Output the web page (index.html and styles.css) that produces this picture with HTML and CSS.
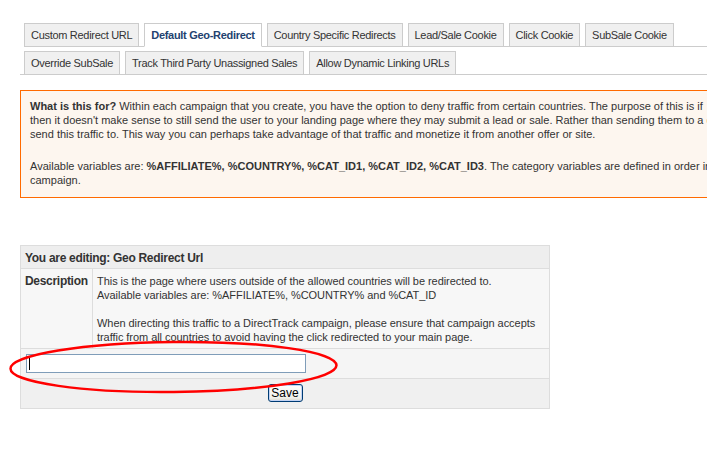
FILE: index.html
```html
<!DOCTYPE html>
<html>
<head>
<title>Default Geo-Redirect</title>
<link rel="stylesheet" href="styles.css">
</head>
<body>
<div class="page">

	<ul class="tabs first_row">
		<li><a href="#">Custom Redirect URL</a></li>
		<li class="active"><a href="#">Default Geo-Redirect</a></li>
		<li><a href="#">Country Specific Redirects</a></li>
		<li><a href="#">Lead/Sale Cookie</a></li>
		<li><a href="#">Click Cookie</a></li>
		<li><a href="#">SubSale Cookie</a></li>
	</ul>
	<ul class="tabs second_row">
		<li><a href="#">Override SubSale</a></li>
		<li><a href="#">Track Third Party Unassigned Sales</a></li>
		<li><a href="#">Allow Dynamic Linking URLs</a></li>
	</ul>

	<div class="notice">
		<p><b>What is this for?</b> Within each campaign that you create, you have the option to deny traffic from certain countries. The purpose of this is if<br>
		then it doesn't make sense to still send the user to your landing page where they may submit a lead or sale. Rather than sending them to a de<br>
		send this traffic to. This way you can perhaps take advantage of that traffic and monetize it from another offer or site.</p>
		<p>Available variables are: <b>%AFFILIATE%, %COUNTRY%, %CAT_ID1, %CAT_ID2, %CAT_ID3</b>. The category variables are defined in order in v<br>
		campaign.</p>
	</div>

	<div class="edit_box">
		<table class="edit_table">
			<tr>
				<th colspan="2" class="heading">You are editing: Geo Redirect Url</th>
			</tr>
			<tr>
				<td class="label">Description</td>
				<td class="info">
					This is the page where users outside of the allowed countries will be redirected to.<br>
					Available variables are: %AFFILIATE%, %COUNTRY% and %CAT_ID<br>
					<br>
					When directing this traffic to a DirectTrack campaign, please ensure that campaign accepts<br>
					traffic from all countries to avoid having the click redirected to your main page.
				</td>
			</tr>
			<tr>
				<td colspan="2" class="field">
					<span class="caret_wrap"><input type="text" class="txturl" name="geo_url"></span>
				</td>
			</tr>
			<tr>
				<td colspan="2" class="buttons">
					<button type="button" class="save">Save</button>
				</td>
			</tr>
		</table>

		<!-- red marker drawn round the url field -->
		<svg class="marker" width="350" height="70" viewBox="0 0 350 70">
			<ellipse cx="173.5" cy="35" rx="163" ry="25" fill="none" stroke="#f00" stroke-width="2.5" transform="rotate(-0.6 173.5 35)"/>
		</svg>
	</div>

</div>
</body>
</html>
```

FILE: styles.css
```css
html {
overflow: hidden;
}

body {
margin: 0;
background: #fff;
color: #333;
font-family: "Liberation Sans", Arial, sans-serif;
font-size: 11px;
}

.page {
padding: 23px 0 0 20px;
}

/* tabs */

.tabs {
display: flex;
gap: 5px;
list-style: none;
margin: 0;
padding: 0;
border-bottom: 1px solid #ccc;
}

.first_row {
margin-left: 4px;
}

.second_row {
margin-top: 4px;
padding-left: 4px;
}

.tabs li {
margin-bottom: -1px;
background: #f0f0f0;
border: 1px solid #ccc;
}

.tabs a {
display: block;
padding: 4px 6px 4px;
line-height: 14px;
color: #333;
text-decoration: none;
letter-spacing: -0.3px;
}

.tabs li.active {
background: #fff;
border-bottom-color: #fff;
}

.tabs li.active a {
color: #23426f;
font-weight: bold;
}

/* orange notice */

.notice {
width: 900px;
margin-top: 15px;
padding: 8px 9px 10px;
background: #fdf6ef;
border: 1px solid #ff6a00;
line-height: 14px;
white-space: nowrap;
}

.notice p {
margin: 0;
}

.notice p + p {
margin-top: 18px;
}

.notice b {
color: #333;
}

/* edit table */

.edit_box {
position: relative;
width: 530px;
margin-top: 47px;
}

.edit_table {
width: 530px;
border-collapse: collapse;
background: #f5f5f5;
border: 1px solid #ddd;
}

.edit_table th,
.edit_table td {
border: 1px solid #ddd;
text-align: left;
vertical-align: top;
line-height: 14px;
}

.edit_table .heading {
height: 14px;
padding: 5px 4px 3px;
background: #eeeeee;
font-weight: bold;
font-size: 12px;
letter-spacing: -0.3px;
}

.edit_table .label {
width: 63px;
padding: 5px 4px 4px;
font-weight: bold;
font-size: 12px;
letter-spacing: -0.3px;
background: #f7f7f7;
}

.edit_table .info {
padding: 5px 4px 4px;
white-space: nowrap;
letter-spacing: -0.05px;
background: #f7f7f7;
}

.edit_table .field {
height: 19px;
padding: 5px 5px;
}

.caret_wrap {
position: relative;
display: inline-block;
vertical-align: top;
}

.caret_wrap::after {
content: "";
position: absolute;
left: 3px;
top: 3px;
width: 1px;
height: 13px;
background: #000;
}

.txturl {
display: block;
box-sizing: border-box;
width: 280px;
height: 19px;
margin: 0;
border: 1px solid #7f9db9;
background: #fff;
}

.edit_table .buttons {
height: 18px;
padding: 5px 0 6px;
background: #f0f0f0;
}

.save {
display: block;
width: 35px;
height: 18px;
margin: 0 auto;
padding: 0;
border: 1px solid #003c74;
border-radius: 3px;
background: linear-gradient(#ffffff, #f0f0ea 80%, #d8d6cc);
box-shadow: inset 0 0 0 1px #c2d3f4;
font-family: "Liberation Sans", Arial, sans-serif;
font-size: 12px;
color: #000;
}

.marker {
position: absolute;
left: -20px;
top: 87px;
}
```
